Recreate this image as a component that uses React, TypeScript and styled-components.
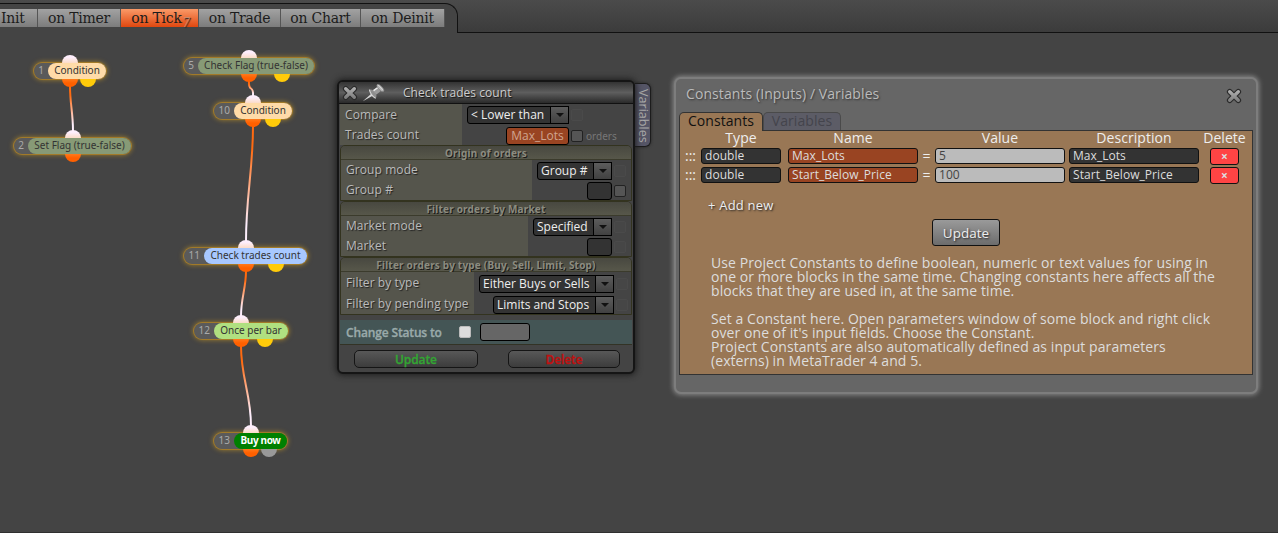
import React from "react";
import styled, { createGlobalStyle, css } from "styled-components";

const Global = createGlobalStyle`
  * { box-sizing: border-box; }
  body { margin: 0; background: #444; font-family: "Open Sans", "Noto Sans", sans-serif; }
`;

const Page = styled.div`
  position: relative;
  width: 1278px;
  height: 533px;
  overflow: hidden;
  background: #444;
  border-bottom: 1px solid #303030;
  display: flex;
  flex-direction: column;
`;

/* ---------- top tabs ---------- */
const TopBar = styled.header`
  height: 33px;
  flex: none;
  display: flex;
  background: linear-gradient(#4b4b4b, #3b3b3b);
`;
const TabStrip = styled.nav`
  width: 458px;
  height: 30px;
  margin-top: 3px;
  padding-top: 5px;
  display: flex;
  background: #444;
  border-top: 1px solid #111;
  border-right: 1px solid #111;
  border-top-right-radius: 13px;
`;
const BarRest = styled.div`
  flex: 1;
  border-bottom: 1px solid #111;
`;
const EventTab = styled.button<{ $w: number; $active?: boolean; $first?: boolean }>`
  width: ${(p) => p.$w}px;
  height: 18px;
  flex: none;
  padding: 0 ${(p) => (p.$active ? 6 : 0)}px 0 ${(p) => (p.$first ? 1 : 0)}px;
  text-align: ${(p) => (p.$first ? "left" : "center")};
  border: 0;
  border-right: 1px solid #555;
  background: ${(p) =>
    p.$active ? "linear-gradient(#fa9a68, #e0470f)" : "linear-gradient(#a2a2a2, #7c7c7c)"};
  color: #1c1c1c;
  font: 14px/18px "DejaVu Serif", serif;
  letter-spacing: -0.25px;
  white-space: nowrap;
  position: relative;
`;
const TickCount = styled.span`
  position: absolute;
  right: 8px;
  top: 7px;
  font-size: 12px;
  line-height: 14px;
  font-style: italic;
  color: #d08a68;
  text-shadow: 1px 1px 1px #222;
`;

/* ---------- diagram ---------- */
const Wires = styled.svg`
  position: absolute;
  left: 0;
  top: 0;
  pointer-events: none;
`;
const NodeBox = styled.div<{ $x: number; $y: number; $w: number }>`
  position: absolute;
  left: ${(p) => p.$x}px;
  top: ${(p) => p.$y}px;
  width: ${(p) => p.$w}px;
  height: 16px;
  display: flex;
  border-radius: 8px;
  background: #5a5a5a;
  box-shadow: 0 0 0 1px rgba(176, 130, 36, 0.75), 0 0 5px 1px rgba(190, 145, 40, 0.75);
`;
const NodeId = styled.span<{ $w: number }>`
  width: ${(p) => p.$w}px;
  flex: none;
  padding-right: 4px;
  text-align: right;
  font: 10px/15px "Noto Sans", sans-serif;
  color: #aaa;
`;
const NodeLabel = styled.span<{ $bg: string; $strong?: boolean; $ls?: number }>`
  flex: 1;
  border-radius: 8px;
  background: ${(p) => p.$bg};
  color: ${(p) => (p.$strong ? "#fff" : "#333")};
  font: ${(p) => (p.$strong ? 700 : 400)} 10px/15px "Noto Sans", sans-serif;
  letter-spacing: ${(p) => p.$ls ?? 0}px;
  text-align: center;
  white-space: nowrap;
`;
const Port = styled.i<{ $x: number; $kind: "in" | "out" | "alt" | "off" }>`
  position: absolute;
  left: ${(p) => p.$x - 8}px;
  width: 16px;
  height: 8px;
  ${(p) =>
    p.$kind === "in"
      ? css`
          top: -8px;
          border-radius: 8px 8px 0 0;
          background: linear-gradient(#fdeefc 30%, #fbdcc8);
        `
      : css`
          top: 16px;
          border-radius: 0 0 8px 8px;
          background: ${p.$kind === "out"
            ? "linear-gradient(#ff7a1c, #ff6000 50%)"
            : p.$kind === "alt"
            ? "#ffcb0a"
            : "#999"};
        `}
`;

type NodeDef = {
  id: number; label: string; x: number; y: number; w: number; idw: number;
  bg: string; port: number; alt?: number; off?: boolean; strong?: boolean; ls?: number;
};
const nodes: NodeDef[] = [
  { id: 1, label: "Condition", x: 34, y: 63, w: 72, idw: 14, bg: "#ffdba8", port: 70, alt: 88 },
  { id: 2, label: "Set Flag (true-false)", x: 14, y: 138, w: 117, idw: 14, bg: "#879a76", port: 73 },
  { id: 5, label: "Check Flag (true-false)", x: 184, y: 58, w: 130, idw: 14, bg: "#879a76", port: 249, alt: 282 },
  { id: 10, label: "Condition", x: 214, y: 103, w: 78, idw: 20, bg: "#ffdba8", port: 253, alt: 273 },
  { id: 11, label: "Check trades count", x: 184, y: 248, w: 123, idw: 20, bg: "#a8c8ff", port: 246, alt: 276 },
  { id: 12, label: "Once per bar", x: 194, y: 323, w: 94, idw: 20, bg: "#b0e080", port: 241, alt: 265 },
  { id: 13, label: "Buy now", x: 214, y: 433, w: 73, idw: 20, bg: "#008000", port: 251, alt: 269, off: true, strong: true, ls: -0.35 },
];
const wires = [
  { d: "M70 86 C70 104 73 112 73 131", y1: 86, y2: 131 },
  { d: "M249 81 C248 93 254 84 253 96", y1: 81, y2: 96 },
  { d: "M253 126 C253 170 246 196 246 241", y1: 126, y2: 241 },
  { d: "M246 271 C246 288 241 298 241 316", y1: 271, y2: 316 },
  { d: "M241 346 C241 378 251 394 251 426", y1: 346, y2: 426 },
];

/* ---------- shared ---------- */
const CrossIcon = () => (
  <svg width="16" height="16" viewBox="0 0 16 16">
    <defs>
      <linearGradient id="cross" gradientUnits="userSpaceOnUse" x1="0" y1="2" x2="0" y2="14">
        <stop offset="0" stopColor="#b4b4b4" />
        <stop offset="1" stopColor="#787878" />
      </linearGradient>
    </defs>
    <path d="M3.7 3.7L12.3 12.3M12.3 3.7L3.7 12.3" stroke="#2a2a2a" strokeWidth="5.6" strokeLinecap="round" />
    <path d="M3.7 3.7L12.3 12.3M12.3 3.7L3.7 12.3" stroke="url(#cross)" strokeWidth="3.4" strokeLinecap="round" />
  </svg>
);
const PinIcon = () => (
  <svg width="24" height="20" viewBox="0 0 24 20">
    <path d="M0.8 18.2L9 11L10.6 12.8Z" fill="#d8d8d8" />
    <path d="M7.2 6.8C9.4 6 12 7.4 13.4 9.6C14.8 11.8 14.8 14.2 13.6 15.6C11.6 14.8 8 10.6 7.2 6.8Z" fill="#8e8e8e" />
    <path d="M7.4 6.6C8 9.8 10.8 13.6 13.6 15.4" stroke="#d6d6d6" strokeWidth="1.1" fill="none" />
    <path d="M10.6 7.4L16 3.6L19.6 7.6L14.4 11.4Z" fill="#9c9c9c" />
    <path d="M11.6 7.6L16.4 4.2" stroke="#eee" strokeWidth="1.4" />
    <ellipse cx="18.4" cy="5" rx="1.9" ry="4.7" transform="rotate(-42 18.4 5)" fill="#b4b4b4" stroke="#7a7a7a" strokeWidth=".6" />
    <path d="M16 1.8L20.8 7" stroke="#dedede" strokeWidth=".8" />
  </svg>
);

/* ---------- block window ---------- */
const BlockWindow = styled.section`
  position: absolute;
  left: 337px;
  top: 80px;
  width: 298px;
  height: 294px;
  border: 2px solid #151515;
  border-radius: 6px;
  background: #444;
  box-shadow: 0 0 6px 1px #1c1c1c;
  display: flex;
  flex-direction: column;
`;
const BlockTitle = styled.header`
  height: 22px;
  flex: none;
  display: flex;
  align-items: center;
  padding-left: 3px;
  border-bottom: 1px solid #111;
  border-radius: 4px 4px 0 0;
  background: linear-gradient(#333, #5e5e5e 50%, #2a2a2a);
  color: #ccc;
  font-size: 12px;
  letter-spacing: 0.05px;
  text-shadow: 1px 1px 1px #111;
`;
const PinSlot = styled.span`
  display: flex;
  width: 45px;
  padding-left: 4px;
  flex: none;
`;
const SideTab = styled.div`
  position: absolute;
  left: 635px;
  top: 83px;
  width: 16px;
  height: 64px;
  border: 1px solid #1c1c1c;
  border-left: 0;
  border-radius: 0 6px 6px 0;
  background: #555566;
  box-shadow: 0 0 3px #222;
  color: #aaa;
  font-size: 12.6px;
  line-height: 14px;
  writing-mode: vertical-rl;
  text-align: center;
  white-space: nowrap;
  padding-top: 2px;
`;
const Group = styled.div<{ $framed?: boolean; $h: number }>`
  height: ${(p) => p.$h}px;
  flex: none;
  margin: 0 1px;
  display: flex;
  flex-direction: column;
  ${(p) =>
    p.$framed &&
    css`
      border: 1px solid #33331f;
      border-radius: 5px 5px 0 0;
    `}
`;
const GroupHead = styled.div`
  height: 14px;
  flex: none;
  border-bottom: 1px solid #3b3b2c;
  border-radius: 4px 4px 0 0;
  background: linear-gradient(#484840, #57574a);
  color: #8c8c80;
  font: 700 10px/14px "Noto Sans", sans-serif;
  letter-spacing: 0.2px;
  text-align: center;
  text-shadow: 1px 1px 0 #1a1a1a;
  white-space: nowrap;
`;
const Row = styled.div`
  flex: 1;
  min-height: 0;
  display: flex;
  align-items: stretch;
`;
const RowLabel = styled.label<{ $w: number; $drop?: number }>`
  width: ${(p) => p.$w}px;
  flex: none;
  padding-left: 5px;
  padding-top: ${(p) => p.$drop ?? 0}px;
  display: flex;
  align-items: center;
  background: #55554c;
  color: #bbb;
  font-size: 12px;
  line-height: 18px;
  letter-spacing: 0.08px;
  text-shadow: 1px 1px 1px #222;
  white-space: nowrap;
`;
const RowField = styled.div<{ $end: number }>`
  flex: 1;
  display: flex;
  align-items: center;
  justify-content: flex-end;
  padding-right: ${(p) => p.$end}px;
  padding-top: 2px;
`;
const Select = styled.div<{ $w: number }>`
  width: ${(p) => p.$w}px;
  height: 18px;
  display: flex;
  border: 1px solid #000;
  border-radius: 3px;
  background: #333;
  color: #eee;
  font-size: 12px;
  line-height: 16px;
  white-space: nowrap;
`;
const SelectText = styled.span`
  flex: 1;
  padding-left: 3px;
`;
const SelectArrow = styled.span`
  width: 19px;
  margin: -1px -1px -1px 0;
  display: grid;
  place-items: center;
  border: 1px solid #000;
  background: linear-gradient(#5c5c5c, #414141);
  &::after {
    content: "";
    border: 4px solid transparent;
    border-top-color: #111;
    border-bottom: 0;
  }
`;
const Input = styled.div<{ $w: number; $bg?: string; $gap?: number }>`
  width: ${(p) => p.$w}px;
  height: 18px;
  flex: none;
  margin-left: ${(p) => p.$gap ?? 0}px;
  border: 1px solid #000;
  border-radius: 3px;
  background: ${(p) => p.$bg ?? "#333"};
  color: #d0a490;
  font-size: 12px;
  line-height: 16px;
  text-align: center;
`;
const Check = styled.i<{ $tone?: "faint" | "light" }>`
  width: 12px;
  height: 12px;
  flex: none;
  margin-left: 2px;
  border: 1px solid ${(p) => (p.$tone === "faint" ? "#4a4a4a" : p.$tone === "light" ? "#bbb" : "#222")};
  border-radius: 2px;
  background: ${(p) => (p.$tone === "faint" ? "#464646" : p.$tone === "light" ? "#ddd" : "#555")};
`;
const Unit = styled.span`
  width: 46px;
  padding-left: 3px;
  color: #777;
  font: 10px/16px "Noto Sans", sans-serif;
`;
const StatusRow = styled.div`
  height: 25px;
  margin: 5px 1px 0;
  padding-left: 6px;
  display: flex;
  align-items: center;
  border-bottom: 1px solid #333325;
  background: #445555;
  color: #9aaaaa;
  font-weight: 600;
  font-size: 12px;
  letter-spacing: -0.15px;
  white-space: nowrap;
`;
const StatusLabel = styled.span`
  width: 111px;
  flex: none;
  -webkit-text-stroke: 0.3px #9aaaaa;
`;
const Buttons = styled.div`
  display: flex;
  justify-content: space-between;
  padding: 5px 13px 0 15px;
`;
const BlockButton = styled.button<{ $w: number; $color: string }>`
  width: ${(p) => p.$w}px;
  height: 18px;
  padding: 0;
  border: 1px solid #151515;
  border-radius: 5px;
  background: linear-gradient(#585858, #3c3c3c);
  color: ${(p) => p.$color};
  font: 600 12px/15px "Open Sans", sans-serif;
  letter-spacing: -0.1px;
  -webkit-text-stroke: 0.3px ${(p) => p.$color};
`;

/* ---------- constants window ---------- */
const ConstWindow = styled.section`
  position: absolute;
  left: 674px;
  top: 77px;
  width: 584px;
  height: 317px;
  padding: 0 3px;
  border: 2px solid #7d7d7d;
  border-radius: 7px;
  background: #666;
  box-shadow: 0 0 5px 1px #8a8a8a;
  display: flex;
  flex-direction: column;
`;
const ConstTitle = styled.header`
  height: 33px;
  flex: none;
  display: flex;
  align-items: center;
  justify-content: space-between;
  padding: 0 11px 5px 7px;
  color: #bbb;
  font-size: 14px;
  letter-spacing: 0.08px;
  text-shadow: 1px 1px 2px #333;
  & > svg { margin-top: 6px; }
`;
const ConstTabs = styled.div`
  height: 18px;
  flex: none;
  display: flex;
  z-index: 1;
`;
const ConstTab = styled.div<{ $w: number; $active?: boolean }>`
  width: ${(p) => p.$w}px;
  height: ${(p) => (p.$active ? 19 : 18)}px;
  border: 1px solid ${(p) => (p.$active ? "#333" : "#4a4a4a")};
  border-bottom: 0;
  border-radius: 5px 5px 0 0;
  background: ${(p) => (p.$active ? "#997755" : "#5c5c66")};
  color: ${(p) => (p.$active ? "#111" : "#44444c")};
  font-size: 14px;
  line-height: 16px;
  letter-spacing: 0.08px;
  text-align: center;
`;
const ConstBody = styled.div`
  height: 245px;
  border: 1px solid #333;
  background: #997755;
  color: #eee;
  display: flex;
  flex-direction: column;
  align-items: stretch;
`;
const Grid = styled.div`
  display: grid;
  grid-template-columns: 21px 80px 7px 130px 17px 130px 4px 130px 11px 29px;
  grid-template-rows: 17px 19px 19px;
  height: 55px;
`;
const ColHead = styled.div<{ $col: number }>`
  grid-column: ${(p) => p.$col};
  grid-row: 1;
  justify-self: center;
  font-size: 14px;
  line-height: 14px;
  letter-spacing: 0.05px;
  white-space: nowrap;
`;
const Cell = styled.div<{ $bg: string; $fg?: string; $col: number; $row: number }>`
  grid-column: ${(p) => p.$col};
  grid-row: ${(p) => p.$row};
  height: 16px;
  padding-left: 3px;
  border: 1px solid #111;
  border-radius: 3px;
  background: ${(p) => p.$bg};
  color: ${(p) => p.$fg ?? "#ddd"};
  font-size: 12px;
  line-height: 14px;
  letter-spacing: 0.05px;
  white-space: nowrap;
`;
const Mark = styled.div<{ $col: number; $row: number }>`
  grid-column: ${(p) => p.$col};
  grid-row: ${(p) => p.$row};
  text-align: center;
  font-size: 14px;
  line-height: 15px;
`;
const DeleteButton = styled.button<{ $row: number }>`
  grid-column: 10;
  grid-row: ${(p) => p.$row};
  height: 17px;
  padding: 0;
  border: 1px solid #111;
  border-radius: 3px;
  background: #ff4444;
  color: #ddd;
  font: 700 12px/14px "Noto Sans", sans-serif;
`;
const AddNew = styled.div`
  margin: 10px 0 0 28px;
  font-size: 13px;
  line-height: 19px;
  letter-spacing: 0.2px;
  text-shadow: 1px 1px 2px #222;
`;
const UpdateButton = styled.button`
  width: 68px;
  height: 27px;
  margin: 4px 0 0 252px;
  flex: none;
  border: 1px solid #111;
  border-radius: 3px;
  background: linear-gradient(#9a9a9a, #6c6c6c);
  padding: 0;
  color: #eee;
  font: 13.5px/24px "Open Sans", sans-serif;
  text-shadow: 1px 1px 2px #222;
`;
const Help = styled.p<{ $top: number }>`
  margin: ${(p) => p.$top}px 0 0 31px;
  color: #ddd;
  font-size: 14px;
  line-height: 14px;
  letter-spacing: 0.07px;
  white-space: nowrap;
`;
const HelpLine = styled.span<{ $ls?: number }>`
  display: block;
  ${(p) => p.$ls !== undefined && `letter-spacing: ${p.$ls}px;`}
`;

const Picker = ({ w, children }: { w: number; children: React.ReactNode }) => (
  <Select $w={w}>
    <SelectText>{children}</SelectText>
    <SelectArrow />
  </Select>
);

const constants = [
  { type: "double", name: "Max_Lots", value: "5" },
  { type: "double", name: "Start_Below_Price", value: "100" },
];

export default function App() {
  return (
    <Page>
      <Global />
      <TopBar>
        <TabStrip>
          <EventTab $w={38} $first>Init</EventTab>
          <EventTab $w={83}>on Timer</EventTab>
          <EventTab $w={78} $active>
            on Tick<TickCount>7</TickCount>
          </EventTab>
          <EventTab $w={82}>on Trade</EventTab>
          <EventTab $w={80}>on Chart</EventTab>
          <EventTab $w={84}>on Deinit</EventTab>
        </TabStrip>
        <BarRest />
      </TopBar>

      <Wires width="360" height="470" fill="none" strokeWidth="2">
        <defs>
          {wires.map((w, i) => (
            <linearGradient key={i} id={`wire${i}`} gradientUnits="userSpaceOnUse" x1="0" y1={w.y1} x2="0" y2={w.y2}>
              <stop offset="0.2" stopColor="#ff6a10" />
              <stop offset="0.85" stopColor="#fdeefc" />
            </linearGradient>
          ))}
        </defs>
        {wires.map((w, i) => (
          <path key={i} d={w.d} stroke={`url(#wire${i})`} />
        ))}
      </Wires>
      {nodes.map((n) => (
        <NodeBox key={n.id} $x={n.x} $y={n.y} $w={n.w}>
          <Port $x={n.port - n.x} $kind="in" />
          <Port $x={n.port - n.x} $kind="out" />
          {n.alt && <Port $x={n.alt - n.x} $kind={n.off ? "off" : "alt"} />}
          <NodeId $w={n.idw}>{n.id}</NodeId>
          <NodeLabel $bg={n.bg} $strong={n.strong} $ls={n.ls}>{n.label}</NodeLabel>
        </NodeBox>
      ))}

      <SideTab>Variables</SideTab>
      <BlockWindow>
        <BlockTitle>
          <CrossIcon />
          <PinSlot><PinIcon /></PinSlot>
          Check trades count
        </BlockTitle>
        <Group $h={41}>
          <Row>
            <RowLabel $w={122} $drop={1}>Compare</RowLabel>
            <RowField $end={49}>
              <Picker w={102}>&lt; Lower than</Picker>
              <Check $tone="faint" />
            </RowField>
          </Row>
          <Row>
            <RowLabel $w={122}>Trades count</RowLabel>
            <RowField $end={3}>
              <Input $w={63} $bg="#994422">Max_Lots</Input>
              <Check />
              <Unit>orders</Unit>
            </RowField>
          </Row>
        </Group>
        <Group $framed $h={56}>
          <GroupHead>Origin of orders</GroupHead>
          <Row>
            <RowLabel $w={191}>Group mode</RowLabel>
            <RowField $end={5}>
              <Picker w={75}>Group #</Picker>
              <Check $tone="faint" />
            </RowField>
          </Row>
          <Row>
            <RowLabel $w={191}>Group #</RowLabel>
            <RowField $end={5}>
              <Input $w={25} />
              <Check />
            </RowField>
          </Row>
        </Group>
        <Group $framed $h={56}>
          <GroupHead>Filter orders by Market</GroupHead>
          <Row>
            <RowLabel $w={187}>Market mode</RowLabel>
            <RowField $end={5}>
              <Picker w={79}>Specified</Picker>
              <Check $tone="faint" />
            </RowField>
          </Row>
          <Row>
            <RowLabel $w={187}>Market</RowLabel>
            <RowField $end={5}>
              <Input $w={25} />
              <Check $tone="faint" />
            </RowField>
          </Row>
        </Group>
        <Group $framed $h={58}>
          <GroupHead>Filter orders by type (Buy, Sell, Limit, Stop)</GroupHead>
          <Row>
            <RowLabel $w={133}>Filter by type</RowLabel>
            <RowField $end={3}>
              <Picker w={135}>Either Buys or Sells</Picker>
              <Check $tone="faint" />
            </RowField>
          </Row>
          <Row>
            <RowLabel $w={133}>Filter by pending type</RowLabel>
            <RowField $end={3}>
              <Picker w={121}>Limits and Stops</Picker>
              <Check $tone="faint" />
            </RowField>
          </Row>
        </Group>
        <StatusRow>
          <StatusLabel>Change Status to</StatusLabel>
          <Check $tone="light" />
          <Input $w={50} $bg="#666" $gap={9} />
        </StatusRow>
        <Buttons>
          <BlockButton $w={124} $color="#33a533">Update</BlockButton>
          <BlockButton $w={112} $color="#c01010">Delete</BlockButton>
        </Buttons>
      </BlockWindow>

      <ConstWindow>
        <ConstTitle>
          Constants (Inputs) / Variables
          <CrossIcon />
        </ConstTitle>
        <ConstTabs>
          <ConstTab $w={84} $active>Constants</ConstTab>
          <ConstTab $w={78}>Variables</ConstTab>
        </ConstTabs>
        <ConstBody>
          <Grid>
            <ColHead $col={2}>Type</ColHead>
            <ColHead $col={4}>Name</ColHead>
            <ColHead $col={6}>Value</ColHead>
            <ColHead $col={8}>Description</ColHead>
            <ColHead $col={10}>Delete</ColHead>
            {constants.map((c, i) => (
              <React.Fragment key={c.name}>
                <Mark $col={1} $row={i + 2}>:::</Mark>
                <Cell $col={2} $row={i + 2} $bg="#333">{c.type}</Cell>
                <Cell $col={4} $row={i + 2} $bg="#994422">{c.name}</Cell>
                <Mark $col={5} $row={i + 2}>=</Mark>
                <Cell $col={6} $row={i + 2} $bg="#bbb" $fg="#444">{c.value}</Cell>
                <Cell $col={8} $row={i + 2} $bg="#333">{c.name}</Cell>
                <DeleteButton $row={i + 2}>×</DeleteButton>
              </React.Fragment>
            ))}
          </Grid>
          <AddNew>+ Add new</AddNew>
          <UpdateButton>Update</UpdateButton>
          <Help $top={10}>
            <HelpLine>Use Project Constants to define boolean, numeric or text values for using in</HelpLine>
            <HelpLine>one or more blocks in the same time. Changing constants here affects all the</HelpLine>
            <HelpLine>blocks that they are used in, at the same time.</HelpLine>
          </Help>
          <Help $top={14}>
            <HelpLine>Set a Constant here. Open parameters window of some block and right click</HelpLine>
            <HelpLine>over one of it's input fields. Choose the Constant.</HelpLine>
            <HelpLine>Project Constants are also automatically defined as input parameters</HelpLine>
            <HelpLine>(externs) in MetaTrader 4 and 5.</HelpLine>
          </Help>
        </ConstBody>
      </ConstWindow>
    </Page>
  );
}
